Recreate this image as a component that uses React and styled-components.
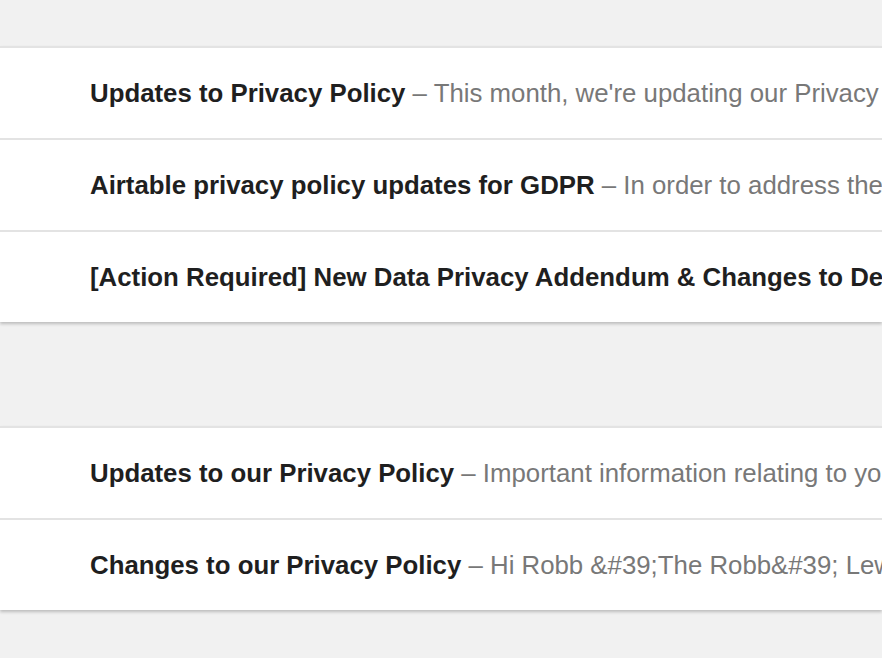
import React from "react";
import styled, { createGlobalStyle } from "styled-components";

const Global = createGlobalStyle`
  *, *::before, *::after { box-sizing: border-box; }
  html, body { margin: 0; padding: 0; background: #f1f1f1; }
  body { font-family: "Liberation Sans", Arial, Helvetica, sans-serif; overflow: hidden; }
`;

const Page = styled.div`
  display: flex;
  flex-direction: column;
  gap: 104px;
  padding-top: 46px;
  width: 882px;
  height: 658px;
  overflow: hidden;
`;

const Card = styled.div`
  background: #fff;
  border-top: 2px solid #e3e3e3;
  box-shadow: 0 2px 3px rgba(0, 0, 0, 0.22);
  display: flex;
  flex-direction: column;
  flex-shrink: 0;
`;

const Row = styled.div`
  height: 92px;
  display: flex;
  align-items: center;
  padding-left: 90px;
  white-space: nowrap;
  overflow: hidden;
  font-size: 25.8px;
  & + & { border-top: 2px solid #e3e3e3; }
  &:first-child { height: 90px; }
`;

const Title = styled.span`
  font-weight: bold;
  color: #1f1f1f;
`;

const Snippet = styled.span`
  color: #787878;
`;

const groups = [
  [
    ["Updates to Privacy Policy", "This month, we're updating our Privacy Policy"],
    ["Airtable privacy policy updates for GDPR", "In order to address the new"],
    ["[Action Required] New Data Privacy Addendum & Changes to Default Settings", ""],
  ],
  [
    ["Updates to our Privacy Policy", "Important information relating to your"],
    ["Changes to our Privacy Policy", "Hi Robb &#39;The Robb&#39; Lewis"],
  ],
];

export default function App() {
  return (
    <>
      <Global />
      <Page>
        {groups.map((g, i) => (
          <Card key={i}>
            {g.map(([t, s], j) => (
              <Row key={j}>
                <Title>{t}</Title>
                {s && <Snippet>&nbsp;– {s}</Snippet>}
              </Row>
            ))}
          </Card>
        ))}
      </Page>
    </>
  );
}
